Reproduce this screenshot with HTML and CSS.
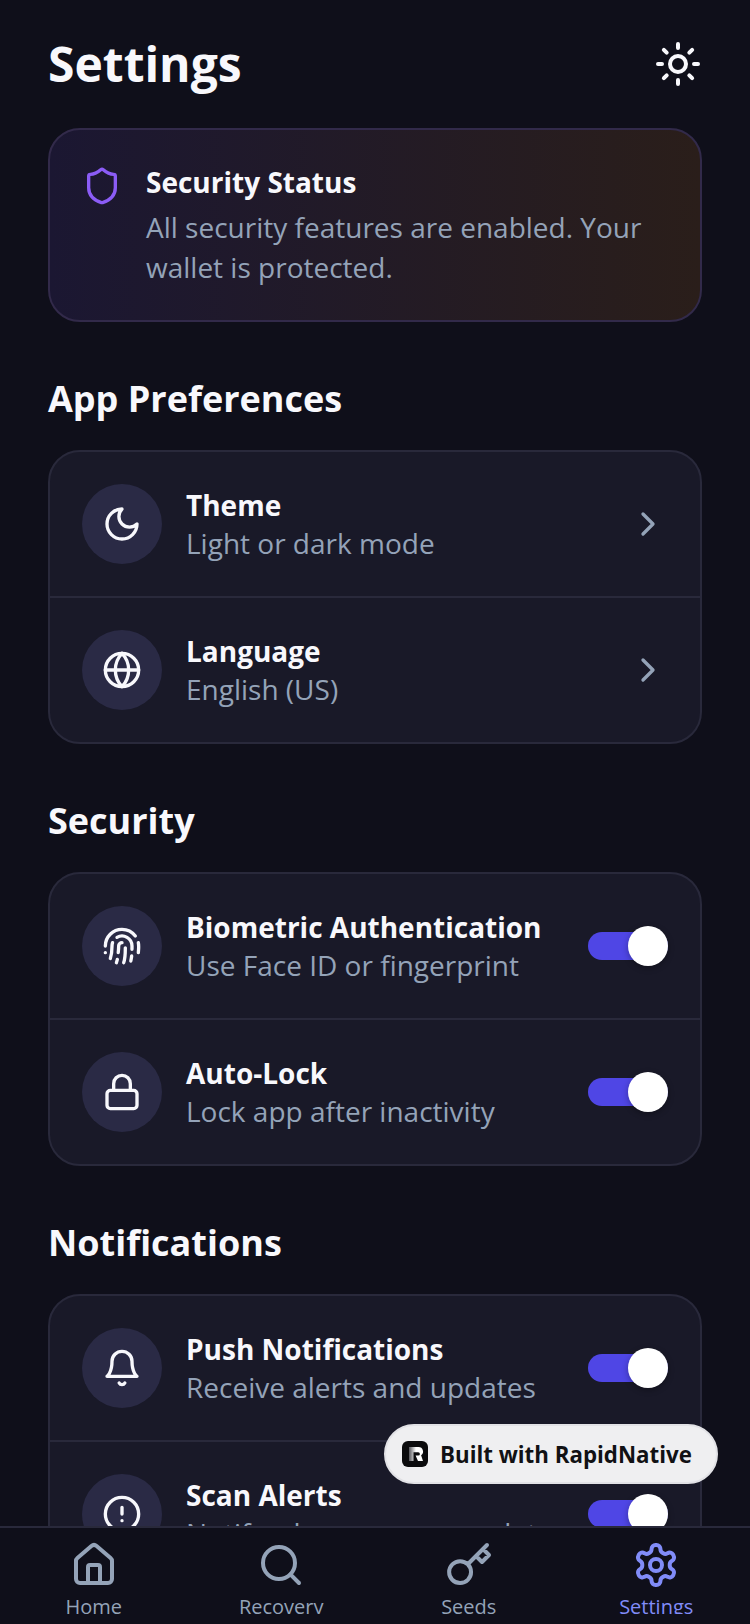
FILE: index.html
```html
<!DOCTYPE html>
<html lang="en">
<head>
    <meta charset="UTF-8">
    <meta name="viewport" content="width=device-width, initial-scale=1.0">
    <title>Settings</title>
    <link rel="stylesheet" href="styles.css">
</head>
<body>
    <div class="app">
        <main class="content">
            <header class="page-header">
                <h1 class="page-title">Settings</h1>
                <svg class="icon icon-sun" viewBox="0 0 24 24"><circle cx="12" cy="12" r="4"/><path d="M12 2v2M12 20v2M4.93 4.93l1.41 1.41M17.66 17.66l1.41 1.41M2 12h2M20 12h2M6.34 17.66l-1.41 1.41M19.07 4.93l-1.41 1.41"/></svg>
            </header>

            <section class="status-card">
                <svg class="icon icon-shield" viewBox="0 0 24 24"><path d="M20 13c0 5-3.5 7.5-7.66 8.95a1 1 0 0 1-.67-.01C7.5 20.5 4 18 4 13V6a1 1 0 0 1 1-1c2 0 4.5-1.2 6.24-2.72a1.17 1.17 0 0 1 1.52 0C14.51 3.81 17 5 19 5a1 1 0 0 1 1 1z"/></svg>
                <div class="status-text">
                    <h3 class="status-title">Security Status</h3>
                    <p class="status-desc">All security features are enabled. Your wallet is protected.</p>
                </div>
            </section>

            <h2 class="section-title">App Preferences</h2>
            <div class="list-card">
                <div class="row">
                    <span class="row-icon"><svg class="icon" viewBox="0 0 24 24"><path d="M12 3a6 6 0 0 0 9 9 9 9 0 1 1-9-9Z"/></svg></span>
                    <div class="row-text"><div class="row-title">Theme</div><div class="row-desc">Light or dark mode</div></div>
                    <svg class="icon icon-chevron" viewBox="0 0 24 24"><path d="m9 18 6-6-6-6"/></svg>
                </div>
                <div class="row">
                    <span class="row-icon"><svg class="icon" viewBox="0 0 24 24"><circle cx="12" cy="12" r="10"/><path d="M12 2a14.5 14.5 0 0 0 0 20 14.5 14.5 0 0 0 0-20M2 12h20"/></svg></span>
                    <div class="row-text"><div class="row-title">Language</div><div class="row-desc">English (US)</div></div>
                    <svg class="icon icon-chevron" viewBox="0 0 24 24"><path d="m9 18 6-6-6-6"/></svg>
                </div>
            </div>

            <h2 class="section-title">Security</h2>
            <div class="list-card">
                <div class="row">
                    <span class="row-icon"><svg class="icon" viewBox="0 0 24 24"><path d="M2 12C2 6.5 6.5 2 12 2a10 10 0 0 1 8 4M5 19.5C5.5 18 6 15 6 12c0-.7.12-1.37.34-2M17.29 21.02c.12-.6.43-2.3.5-3.02M12 10a2 2 0 0 0-2 2c0 1.02-.1 2.51-.26 4M8.65 22c.21-.66.45-1.32.57-2M14 13.12c0 2.38 0 6.38-1 8.88M2 16h.01M21.8 16c.2-2 .131-5.354 0-6M9 6.8a6 6 0 0 1 9 5.2c0 .47 0 1.17-.02 2"/></svg></span>
                    <div class="row-text"><div class="row-title">Biometric Authentication</div><div class="row-desc">Use Face ID or fingerprint</div></div>
                    <span class="toggle"><span class="toggle-thumb"></span></span>
                </div>
                <div class="row">
                    <span class="row-icon"><svg class="icon" viewBox="0 0 24 24"><rect x="3" y="11" width="18" height="11" rx="2" ry="2"/><path d="M7 11V7a5 5 0 0 1 10 0v4"/></svg></span>
                    <div class="row-text"><div class="row-title">Auto-Lock</div><div class="row-desc">Lock app after inactivity</div></div>
                    <span class="toggle"><span class="toggle-thumb"></span></span>
                </div>
            </div>

            <h2 class="section-title">Notifications</h2>
            <div class="list-card">
                <div class="row">
                    <span class="row-icon"><svg class="icon" viewBox="0 0 24 24"><path d="M6 8a6 6 0 0 1 12 0c0 7 3 9 3 9H3s3-2 3-9M10.3 21a1.94 1.94 0 0 0 3.4 0"/></svg></span>
                    <div class="row-text"><div class="row-title">Push Notifications</div><div class="row-desc">Receive alerts and updates</div></div>
                    <span class="toggle"><span class="toggle-thumb"></span></span>
                </div>
                <div class="row">
                    <span class="row-icon"><svg class="icon" viewBox="0 0 24 24"><circle cx="12" cy="12" r="10"/><path d="M12 8v4M12 16h.01"/></svg></span>
                    <div class="row-text"><div class="row-title">Scan Alerts</div><div class="row-desc">Notify when scans complete</div></div>
                    <span class="toggle"><span class="toggle-thumb"></span></span>
                </div>
            </div>
        </main>

        <div class="built-badge">
            <svg class="built-logo" viewBox="0 0 26 26">
                <defs><linearGradient id="logoFade" x1="0" y1="0" x2="1" y2="0"><stop offset="0" stop-color="#55555a"/><stop offset="0.5" stop-color="#fff"/></linearGradient></defs>
                <rect width="26" height="26" rx="6" fill="#0b0b0d"/>
                <path d="M7 6h9.5a4.5 4.5 0 0 1 2.6 8.2L21 20h-5l-2.4-5.4h2.6a1.7 1.7 0 0 0 0-3.4H11.5V20H7z" fill="url(#logoFade)"/>
            </svg>
            <span>Built with RapidNative</span>
        </div>

        <nav class="tabbar">
            <div class="tab">
                <svg class="icon tab-icon" viewBox="0 0 24 24"><path d="M15 21v-8a1 1 0 0 0-1-1h-4a1 1 0 0 0-1 1v8"/><path d="M3 10a2 2 0 0 1 .709-1.528l7-5.999a2 2 0 0 1 2.582 0l7 5.999A2 2 0 0 1 21 10v9a2 2 0 0 1-2 2H5a2 2 0 0 1-2-2z"/></svg>
                <span class="tab-label">Home</span>
            </div>
            <div class="tab">
                <svg class="icon tab-icon" viewBox="0 0 24 24"><circle cx="11" cy="11" r="8"/><path d="m21 21-4.3-4.3"/></svg>
                <span class="tab-label">Recovery</span>
            </div>
            <div class="tab">
                <svg class="icon tab-icon" viewBox="0 0 24 24"><path d="m21 2-2 2m-7.61 7.61a5.5 5.5 0 1 1-7.778 7.778 5.5 5.5 0 0 1 7.777-7.777zm0 0L15.5 7.5m0 0 3 3L22 7l-3-3m-3.5 3.5L19 4"/></svg>
                <span class="tab-label">Seeds</span>
            </div>
            <div class="tab tab-active">
                <svg class="icon tab-icon" viewBox="0 0 24 24"><path d="M12.22 2h-.44a2 2 0 0 0-2 2v.18a2 2 0 0 1-1 1.73l-.43.25a2 2 0 0 1-2 0l-.15-.08a2 2 0 0 0-2.73.73l-.22.38a2 2 0 0 0 .73 2.73l.15.1a2 2 0 0 1 1 1.72v.51a2 2 0 0 1-1 1.74l-.15.09a2 2 0 0 0-.73 2.73l.22.38a2 2 0 0 0 2.73.73l.15-.08a2 2 0 0 1 2 0l.43.25a2 2 0 0 1 1 1.73V20a2 2 0 0 0 2 2h.44a2 2 0 0 0 2-2v-.18a2 2 0 0 1 1-1.73l.43-.25a2 2 0 0 1 2 0l.15.08a2 2 0 0 0 2.73-.73l.22-.39a2 2 0 0 0-.73-2.73l-.15-.08a2 2 0 0 1-1-1.74v-.5a2 2 0 0 1 1-1.74l.15-.09a2 2 0 0 0 .73-2.73l-.22-.38a2 2 0 0 0-2.73-.73l-.15.08a2 2 0 0 1-2 0l-.43-.25a2 2 0 0 1-1-1.73V4a2 2 0 0 0-2-2z"/><circle cx="12" cy="12" r="3"/></svg>
                <span class="tab-label">Settings</span>
            </div>
        </nav>
    </div>
</body>
</html>
```
FILE: styles.css
```css
/* Settings screen */
* {
    box-sizing: border-box;
}
html, body {
    margin: 0;
    padding: 0;
}
body {
    font-family: "Open Sans", "Noto Sans", sans-serif;
    background-color: #0f0f1a;
    color: #f8f8fc;
}
.app {
    position: relative;
    width: 750px;
    height: 1624px;
    display: flex;
    flex-direction: column;
    overflow: hidden;
}
.content {
    flex: 1;
    min-height: 0;
    overflow: hidden;
    padding: 32px 48px 0;
}
.icon {
    width: 40px;
    height: 40px;
    fill: none;
    stroke: #f8f8fc;
    stroke-width: 2;
    stroke-linecap: round;
    stroke-linejoin: round;
    flex-shrink: 0;
}

/* header */
.page-header {
    display: flex;
    align-items: center;
    justify-content: space-between;
    height: 64px;
    margin-bottom: 32px;
}
.page-title {
    margin: 0;
    font-size: 48px;
    line-height: 64px;
    font-weight: 700;
}
.icon-sun {
    width: 48px;
    height: 48px;
}

/* security status */
.status-card {
    display: flex;
    gap: 24px;
    height: 194px;
    padding: 32px;
    border: 2px solid #322a4a;
    border-radius: 32px;
    background: linear-gradient(90deg, #1b1732, #2a1e1a);
}
.icon-shield {
    margin-top: 4px;
    stroke: #8b5cf6;
}
.status-text {
    flex: 1;
}
.status-title {
    margin: 0 0 5px;
    font-size: 28px;
    line-height: 40px;
    font-weight: 700;
}
.status-desc {
    margin: 0;
    font-size: 28px;
    line-height: 40px;
    color: #94a3b8;
}

/* sections */
.section-title {
    margin: 53px 0 27px;
    font-size: 36px;
    line-height: 48px;
    font-weight: 700;
}
.list-card {
    border: 2px solid #29293b;
    border-radius: 32px;
    background-color: #191928;
}
.row {
    display: flex;
    align-items: center;
    gap: 24px;
    padding: 32px;
    border-bottom: 2px solid #29293b;
}
.row:last-child {
    border-bottom: none;
}
.row-icon {
    display: flex;
    align-items: center;
    justify-content: center;
    width: 80px;
    height: 80px;
    border-radius: 50%;
    background-color: #2a2a45;
    flex-shrink: 0;
}
.row-text {
    flex: 1;
    min-width: 0;
}
.row-title {
    font-size: 28px;
    line-height: 38px;
    font-weight: 700;
}
.row-desc {
    font-size: 28px;
    line-height: 38px;
    color: #94a3b8;
}
.icon-chevron {
    stroke: #94a3b8;
}
.toggle {
    position: relative;
    display: block;
    width: 80px;
    height: 28px;
    border-radius: 14px;
    background-color: #4f46e5;
    flex-shrink: 0;
}
.toggle-thumb {
    position: absolute;
    top: -6px;
    right: 0;
    width: 40px;
    height: 40px;
    border-radius: 50%;
    background-color: #fff;
    box-shadow: 0 2px 6px rgba(0, 0, 0, 0.3);
}

/* floating badge */
.built-badge {
    position: absolute;
    left: 384px;
    top: 1424px;
    display: flex;
    align-items: center;
    gap: 12px;
    width: 334px;
    height: 60px;
    padding: 0 16px;
    border: 2px solid #e2e2e6;
    border-radius: 30px;
    background-color: #efeff1;
    color: #111114;
    font-size: 22.3px;
    font-weight: 700;
    white-space: nowrap;
}
.built-logo {
    width: 26px;
    height: 26px;
    flex-shrink: 0;
}

/* bottom tabs */
.tabbar {
    display: flex;
    height: 98px;
    flex-shrink: 0;
    padding-top: 13px;
    border-top: 2px solid #29293b;
    background-color: #0f0f1a;
}
.tab {
    flex: 1;
    display: flex;
    flex-direction: column;
    align-items: center;
}
.tab-icon {
    width: 48px;
    height: 48px;
    stroke: #94a3b8;
}
.tab-label {
    display: block;
    height: 25px;
    overflow: hidden;
    font-size: 20px;
    line-height: 36px;
    color: #94a3b8;
}
.tab-active .tab-icon {
    stroke: #818cf8;
}
.tab-active .tab-label {
    color: #818cf8;
}
```
